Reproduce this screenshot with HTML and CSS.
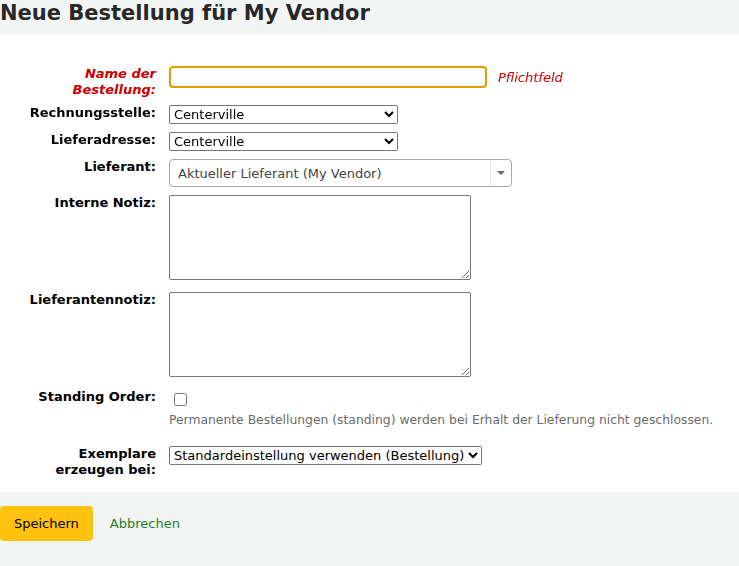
FILE: index.html
```html
<!DOCTYPE html>
<html lang="de">
<head>
<meta charset="utf-8">
<title>Neue Bestellung für My Vendor</title>
<link rel="stylesheet" href="styles.css">
</head>
<body>
<h1 class="page-title">Neue Bestellung für My Vendor</h1>
<form class="order-form">
  <ol class="form-list">
    <li class="form-row">
      <label class="form-label required" for="basketname">Name der Bestellung:</label>
      <div class="control-inline">
        <input class="text-input" type="text" id="basketname" autofocus>
        <span class="required-note">Pflichtfeld</span>
      </div>
    </li>
    <li class="form-row">
      <label class="form-label" for="billingplace">Rechnungsstelle:</label>
      <select class="native-select wide" id="billingplace"><option>Centerville</option></select>
    </li>
    <li class="form-row">
      <label class="form-label" for="deliveryplace">Lieferadresse:</label>
      <select class="native-select wide" id="deliveryplace"><option>Centerville</option></select>
    </li>
    <li class="form-row">
      <label class="form-label">Lieferant:</label>
      <div class="select2">
        <span class="select2-text">Aktueller Lieferant (My Vendor)</span>
        <span class="select2-arrow"><b class="select2-caret"></b></span>
      </div>
    </li>
    <li class="form-row">
      <label class="form-label" for="note">Interne Notiz:</label>
      <textarea class="note-area" id="note"></textarea>
    </li>
    <li class="form-row">
      <label class="form-label" for="vendornote">Lieferantennotiz:</label>
      <textarea class="note-area" id="vendornote"></textarea>
    </li>
    <li class="form-row">
      <label class="form-label" for="standing">Standing Order:</label>
      <div class="control-stack">
        <input class="check" type="checkbox" id="standing">
        <div class="hint">Permanente Bestellungen (standing) werden bei Erhalt der Lieferung nicht geschlossen.</div>
      </div>
    </li>
    <li class="form-row">
      <label class="form-label" for="create_items">Exemplare erzeugen bei:</label>
      <select class="native-select" id="create_items"><option>Standardeinstellung verwenden (Bestellung)</option></select>
    </li>
  </ol>
  <div class="action-bar">
    <button type="button" class="btn-save">Speichern</button>
    <a class="cancel-link" href="#">Abbrechen</a>
  </div>
</form>
</body>
</html>
```

FILE: styles.css
```css
html, body {
  margin: 0;
  padding: 0;
  background: #ffffff;
  font-family: "DejaVu Sans", sans-serif;
  font-size: 13px;
  color: #000;
}

.page-title {
  margin: 0;
  padding: 1px 0 10px 0;
  font-size: 21px;
  line-height: 24px;
  font-weight: bold;
  color: #282828;
  background: #f3f4f4;
}

.order-form {
  margin: 0;
}

.form-list {
  list-style: none;
  margin: 27px 0 11px 0;
  padding: 0;
}

.form-row {
  display: flex;
  align-items: flex-start;
  padding: 4px 0;
}

.form-label {
  flex: 0 0 132px;
  width: 132px;
  margin-left: 24px;
  margin-right: 13px;
  text-align: right;
  font-weight: bold;
  line-height: 15.6px;
  color: #000;
}

.form-label.required {
  color: #cc0000;
  font-style: italic;
}

.control-inline {
  display: flex;
  align-items: center;
}

.text-input {
  box-sizing: border-box;
  width: 318px;
  height: 22px;
  margin: 0;
  padding: 1px 3px;
  border: 2px solid #e69c00;
  border-radius: 4px;
  font-family: "DejaVu Sans", sans-serif;
  font-size: 13px;
  outline: none;
  caret-color: #990000;
  background: #fff;
}

.text-input:focus {
  outline: none;
  border-color: #e69c00;
}

.required-note {
  margin-left: 11px;
  color: #cc0000;
  font-style: italic;
  font-size: 13px;
}

.native-select {
  box-sizing: border-box;
  height: 19px;
  margin: 0;
  font-family: "DejaVu Sans", sans-serif;
  font-size: 13px;
  color: #000;
}

.native-select.wide {
  width: 229px;
}

.select2 {
  box-sizing: border-box;
  display: flex;
  align-items: stretch;
  width: 343px;
  height: 28px;
  border: 1px solid #aaaaaa;
  border-radius: 4px;
  background: #fff;
}

.select2-text {
  flex: 1;
  padding-left: 8px;
  line-height: 27px;
  color: #444444;
  font-size: 13px;
}

.select2-arrow {
  flex: 0 0 20px;
  display: flex;
  align-items: center;
  justify-content: center;
  border-left: 1px solid #e4e4e4;
}

.select2-caret {
  width: 0;
  height: 0;
  border-style: solid;
  border-width: 4px 4px 0 4px;
  border-color: #666 transparent transparent transparent;
}

.note-area {
  box-sizing: border-box;
  display: block;
  width: 302px;
  height: 85px;
  margin: 0 0 4px 0;
  border: 1px solid #767676;
  border-radius: 2px;
  font-family: "DejaVu Sans", sans-serif;
  font-size: 13px;
}

.control-stack {
  display: flex;
  flex-direction: column;
  align-items: flex-start;
}

.check {
  width: 13px;
  height: 13px;
  margin: 4px 0 2px 5px;
}

.hint {
  margin: 5px 0 11px 0;
  font-size: 12.35px;
  line-height: 14px;
  color: #6b6b6b;
}

.action-bar {
  display: flex;
  align-items: center;
  background: #f3f4f4;
  padding: 14px 0 26px 0;
}

.btn-save {
  box-sizing: border-box;
  height: 35px;
  padding: 0 14px;
  border: none;
  border-radius: 4px;
  background: #ffc20e;
  color: #000;
  font-family: "DejaVu Sans", sans-serif;
  font-size: 13px;
  line-height: 35px;
}

.cancel-link {
  margin-left: 17px;
  color: #1e7d1e;
  text-decoration: none;
  font-size: 13px;
}
```
